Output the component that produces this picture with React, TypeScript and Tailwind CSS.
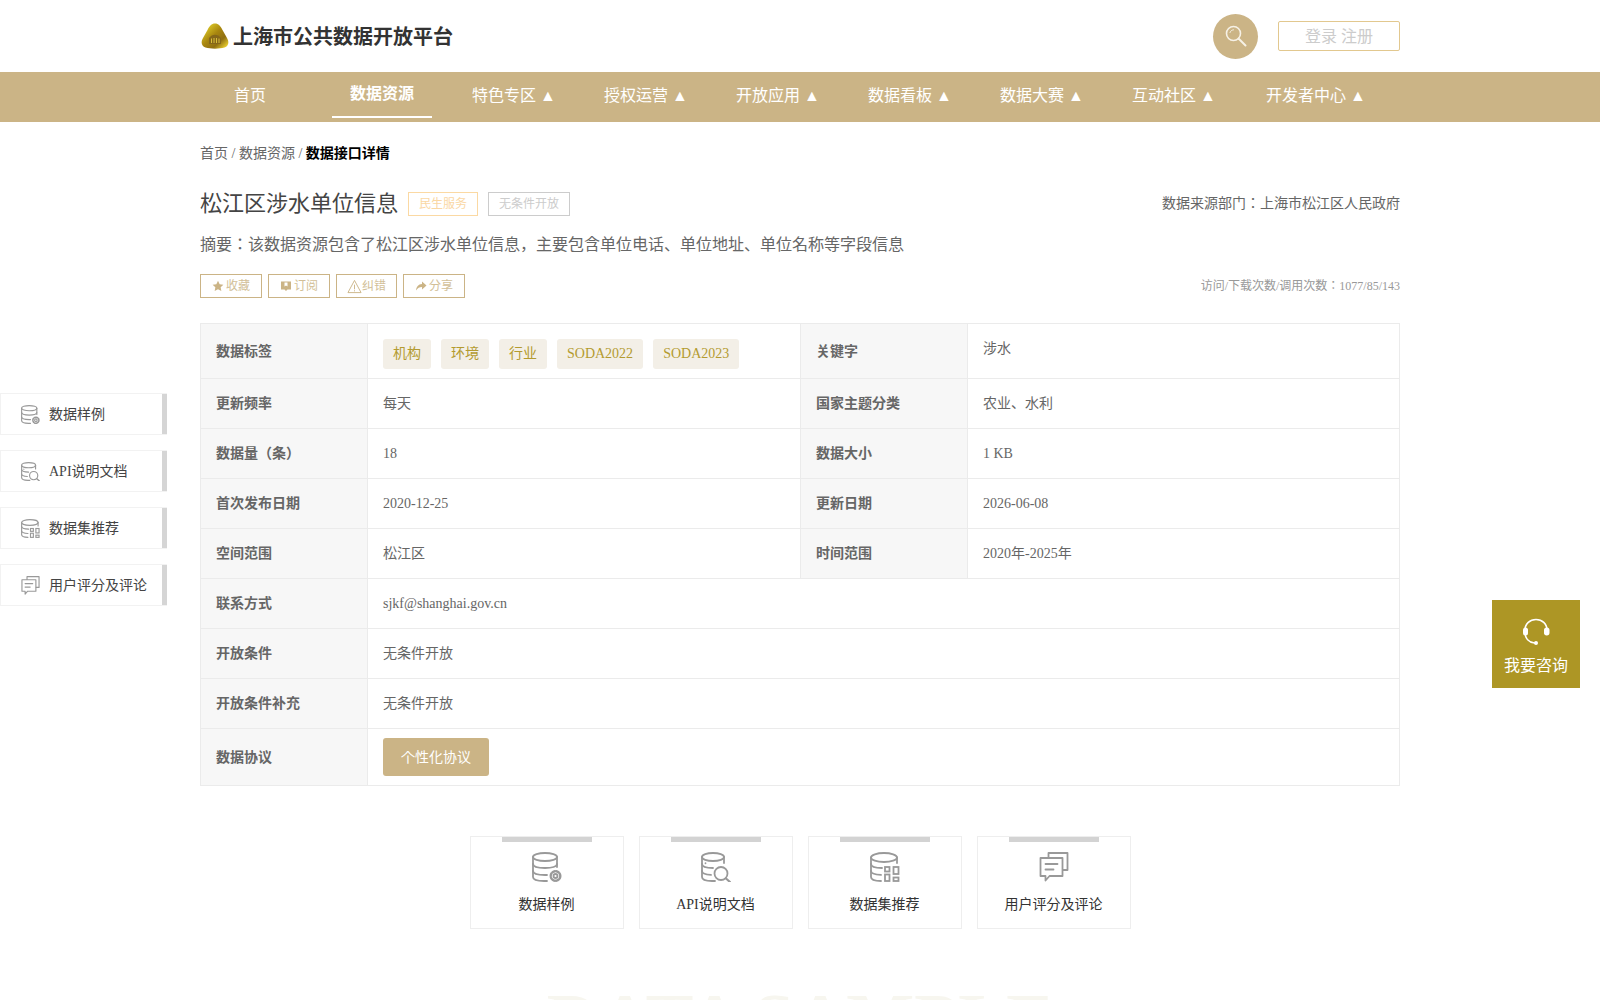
import React from "react";

const navItems = [
  { label: "首页", width: "w-[100px]" },
  { label: "数据资源", width: "w-[100px]", active: true },
  { label: "特色专区 ▲", width: "w-[100px]" },
  { label: "授权运营 ▲", width: "w-[100px]" },
  { label: "开放应用 ▲", width: "w-[100px]" },
  { label: "数据看板 ▲", width: "w-[100px]" },
  { label: "数据大赛 ▲", width: "w-[100px]" },
  { label: "互动社区 ▲", width: "w-[100px]" },
  { label: "开发者中心 ▲", width: "w-[120px]" },
];

const dataTags = ["机构", "环境", "行业", "SODA2022", "SODA2023"];

const labelCell =
  "w-[168px] border border-[#ebebeb] bg-[#f7f7f7] pl-[15px] text-[14px] font-bold text-[#666]";
const valueCell = "border border-[#ebebeb] pl-[15px] text-[14px] text-[#666]";

function SampleIcon() {
  return (
    <svg viewBox="0 0 30 30" className="h-full w-full" fill="none" stroke="#999" strokeWidth="1.800" strokeLinecap="round">
      <ellipse cx="13" cy="5" rx="12" ry="4" />
      <path d="M1 5V25c0 2.600 4 4 11 4h3" />
      <path d="M25 5V15" />
      <path d="M1 12c0 2.600 5 4 12 4s12-1.400 12-4" />
      <path d="M1 19c0 2.600 5 4 12 4h2" />
      <circle cx="23.500" cy="24" r="2" />
      <circle cx="23.500" cy="24" r="4.800" strokeWidth="2.400" strokeDasharray="2.400 1.400" />
    </svg>
  );
}

function ApiIcon() {
  return (
    <svg viewBox="0 0 30 30" className="h-full w-full" fill="none" stroke="#999" strokeWidth="1.800" strokeLinecap="round">
      <ellipse cx="12" cy="5" rx="11" ry="4" />
      <path d="M1 5V25c0 2.600 4 4 10 4h3" />
      <path d="M23 5V11" />
      <path d="M1 12c0 2.600 5 4 11 4" />
      <path d="M1 19c0 2.400 3 3.600 9 3.900" />
      <path d="M4.500 11.200v.1" />
      <circle cx="20" cy="21.500" r="6.500" />
      <path d="M25 26.500l4 3.500" strokeWidth="2.200" />
    </svg>
  );
}

function RecommendIcon() {
  return (
    <svg viewBox="0 0 30 30" className="h-full w-full" fill="none" stroke="#999" strokeWidth="1.800" strokeLinecap="round">
      <ellipse cx="14" cy="5.500" rx="13" ry="4.500" />
      <path d="M1 5.500V25c0 2.600 4 4 10 4" />
      <path d="M27 5.500V11" />
      <path d="M1 12c0 2.600 5 4 11 4" />
      <path d="M1 19c0 2.600 4 3.600 10 3.900" />
      <rect x="15" y="15" width="4.500" height="4.500" />
      <rect x="23.500" y="15" width="5" height="7" />
      <rect x="15" y="22.500" width="4.500" height="6.500" />
      <rect x="23.500" y="25.500" width="5" height="3.500" />
    </svg>
  );
}

function CommentIcon() {
  return (
    <svg viewBox="0 0 30 30" className="h-full w-full" fill="none" stroke="#999" strokeWidth="1.800" strokeLinecap="round" strokeLinejoin="round">
      <path d="M9.500 5.500V1h19v17H24" />
      <path d="M1.500 6h22v18H10.500l-4 4.500V24h-5z" />
      <path d="M6.500 12h12M6.500 17.500h8" />
    </svg>
  );
}

const sections = [
  { label: "数据样例", icon: <SampleIcon /> },
  { label: "API说明文档", icon: <ApiIcon /> },
  { label: "数据集推荐", icon: <RecommendIcon /> },
  { label: "用户评分及评论", icon: <CommentIcon /> },
];

function Logo() {
  return (
    <svg viewBox="0 0 28 26" className="h-[26px] w-[28px]">
      <defs>
        <linearGradient id="logoGold" x1="0.1" y1="0.1" x2="0.9" y2="0.9">
          <stop offset="0" stopColor="#e3d22a" />
          <stop offset="0.45" stopColor="#a8860f" />
          <stop offset="0.75" stopColor="#8f6f12" />
          <stop offset="1" stopColor="#e0c42a" />
        </linearGradient>
      </defs>
      <path d="M14 .5c3.500 0 5.500 2.500 7.500 6.500l4.500 8c2.500 4.500 1.500 8-2.500 9.500-5 1.500-14 1.500-19 0C.5 23 -.5 19.500 2 15l4.500-8C8.500 3 10.500.5 14 .5z" fill="url(#logoGold)" />
      <path d="M8 15c3-4.500 9-4.500 12 0v6H8z" fill="#85671a" />
      <path d="M10.500 15.500v4.500M13 15v5M15.500 15v5M18 15.500v4.500" stroke="#d9bf3a" strokeWidth="1" />
    </svg>
  );
}

function ActionButton({ icon, label, width, gap }: { icon: React.ReactNode; label: string; width: string; gap: string }) {
  return (
    <button className={`flex h-[24px] items-center justify-center border border-[#cbb486] text-[12px] text-[#d2bf98] ${width} ${gap}`}>
      {icon}
      {label}
    </button>
  );
}

export default function App() {
  return (
    <div className="relative h-[1000px] overflow-hidden bg-white [font-family:'Liberation_Serif','Noto_Sans_CJK_JP',serif]">
      {/* header */}
      <div className="mx-auto flex h-[72px] w-[1200px] items-center justify-between">
        <div className="flex items-center gap-[4px] pl-[1px]">
          <Logo />
          <span className="mt-[2px] text-[20px] font-bold text-[#333]">上海市公共数据开放平台</span>
        </div>
        <div className="flex items-center gap-[20px]">
          <div className="flex h-[45px] w-[45px] items-center justify-center rounded-full bg-[#cbb486]">
            <svg viewBox="0 0 22 22" className="h-[22px] w-[22px]" fill="none" stroke="#f6f1e6" strokeWidth="1.600" strokeLinecap="round">
              <circle cx="8.500" cy="8.500" r="7" />
              <path d="M13.500 13.500l7 7" strokeWidth="2" />
              <path d="M5 7.500c.5-1.500 1.700-2.500 3.500-2.700" strokeWidth="1" />
            </svg>
          </div>
          <div className="flex h-[30px] w-[122px] items-center justify-center rounded-[2px] border border-[#e2c88f] pt-[1px] text-[16px] text-[#ccc]">
            登录 注册
          </div>
        </div>
      </div>

      {/* nav */}
      <div className="h-[50px] bg-[#cbb486]">
        <div className="mx-auto flex h-full w-[1200px] gap-[32px] text-[16px] text-white">
          {navItems.map((item) => (
            <div
              key={item.label}
              className={`flex h-[46px] shrink-0 items-center justify-center ${item.width} ${
                item.active ? "border-b-2 border-white font-bold" : "mt-[1px]"
              }`}
            >
              <span className="whitespace-nowrap">{item.label}</span>
            </div>
          ))}
        </div>
      </div>

      <div className="mx-auto w-[1200px]">
        {/* breadcrumb */}
        <div className="mt-[23px] text-[14px] leading-[18px] text-[#666]">
          首页 / 数据资源 / <span className="font-bold text-black">数据接口详情</span>
        </div>

        {/* title */}
        <div className="mt-[25px] flex h-[30px] items-center justify-between">
          <div className="flex items-center">
            <span className="text-[22px] text-[#444]">松江区涉水单位信息</span>
            <span className="mt-[1px] ml-[10px] flex h-[24px] items-center border border-[#fbd9a3] px-[10px] text-[12px] text-[#fad7a4]">
              民生服务
            </span>
            <span className="mt-[1px] ml-[10px] flex h-[24px] items-center border border-[#ccc] px-[10px] text-[12px] text-[#ccc]">
              无条件开放
            </span>
          </div>
          <span className="text-[14px] text-[#666]">数据来源部门：上海市松江区人民政府</span>
        </div>

        <div className="mt-[15px] text-[16px] leading-[24px] text-[#666]">
          摘要：该数据资源包含了松江区涉水单位信息，主要包含单位电话、单位地址、单位名称等字段信息
        </div>

        {/* actions */}
        <div className="mt-[17px] flex items-center justify-between">
          <div className="flex gap-[6px]">
            <ActionButton
              width="w-[62px]"
              gap="gap-[2px]"
              label="收藏"
              icon={
                <svg viewBox="0 0 24 24" className="h-[12px] w-[12px]" fill="#cbb486">
                  <path d="M12 1.500l3.300 6.900 7.500 1-5.500 5.200 1.400 7.500L12 18.400 5.300 22l1.400-7.500L1.200 9.400l7.500-1z" />
                </svg>
              }
            />
            <ActionButton
              width="w-[62px]"
              gap="gap-[2px]"
              label="订阅"
              icon={
                <svg viewBox="0 0 12 12" className="h-[12px] w-[12px]" fill="#cbb486">
                  <path fillRule="evenodd" d="M1 1.500h10v8H7.500L6 11 4.500 9.500H1zM4.500 2.500v4L6 5.500l1.500 1v-4z" />
                </svg>
              }
            />
            <ActionButton
              width="w-[61px]"
              gap="gap-0"
              label="纠错"
              icon={
                <svg viewBox="0 0 16 16" className="h-[15px] w-[15px]" fill="none" stroke="#cbb486" strokeWidth="1">
                  <path d="M8 1.500l7 13H1z" />
                  <path d="M8 6v5M8 12v1.200" />
                </svg>
              }
            />
            <ActionButton
              width="w-[62px]"
              gap="gap-[2px]"
              label="分享"
              icon={
                <svg viewBox="0 0 12 12" className="h-[12px] w-[12px]" fill="#cbb486">
                  <path d="M7 1.500l4.500 4L7 9.500V7C4.500 7 2.500 8 1 10.500 1.300 7 3.300 4.200 7 4z" />
                </svg>
              }
            />
          </div>
          <span className="text-[12px] text-[#999]">访问/下载次数/调用次数：1077/85/143</span>
        </div>

        {/* info table */}
        <table className="mt-[25px] w-[1199px] table-fixed border-collapse border border-[#ebebeb]">
          <colgroup>
            <col className="w-[167px]" />
            <col className="w-[433px]" />
            <col className="w-[167px]" />
            <col className="w-[432px]" />
          </colgroup>
          <tbody>
            <tr className="h-[55px]">
              <td className={labelCell}>数据标签</td>
              <td className={valueCell}>
                <div className="mt-[5px] flex gap-[10px]">
                  {dataTags.map((tag) => (
                    <span key={tag} className="flex h-[30px] items-center rounded-[3px] bg-[#f3efe7] px-[10px] text-[14px] text-[#b39b30]">
                      {tag}
                    </span>
                  ))}
                </div>
              </td>
              <td className={labelCell}>关键字</td>
              <td className={`${valueCell} pb-[5px]`}>涉水</td>
            </tr>
            <tr className="h-[50px]">
              <td className={labelCell}>更新频率</td>
              <td className={valueCell}>每天</td>
              <td className={labelCell}>国家主题分类</td>
              <td className={valueCell}>农业、水利</td>
            </tr>
            <tr className="h-[50px]">
              <td className={labelCell}>数据量（条）</td>
              <td className={valueCell}>18</td>
              <td className={labelCell}>数据大小</td>
              <td className={valueCell}>1 KB</td>
            </tr>
            <tr className="h-[50px]">
              <td className={labelCell}>首次发布日期</td>
              <td className={valueCell}>2020-12-25</td>
              <td className={labelCell}>更新日期</td>
              <td className={valueCell}>2026-06-08</td>
            </tr>
            <tr className="h-[50px]">
              <td className={labelCell}>空间范围</td>
              <td className={valueCell}>松江区</td>
              <td className={labelCell}>时间范围</td>
              <td className={valueCell}>2020年-2025年</td>
            </tr>
            <tr className="h-[50px]">
              <td className={labelCell}>联系方式</td>
              <td className={valueCell} colSpan={3}>sjkf@shanghai.gov.cn</td>
            </tr>
            <tr className="h-[50px]">
              <td className={labelCell}>开放条件</td>
              <td className={valueCell} colSpan={3}>无条件开放</td>
            </tr>
            <tr className="h-[50px]">
              <td className={labelCell}>开放条件补充</td>
              <td className={valueCell} colSpan={3}>无条件开放</td>
            </tr>
            <tr className="h-[57px]">
              <td className={labelCell}>数据协议</td>
              <td className={valueCell} colSpan={3}>
                <button className="flex h-[38px] w-[106px] items-center justify-center rounded-[3px] bg-[#cbb486] text-[14px] text-white">
                  个性化协议
                </button>
              </td>
            </tr>
          </tbody>
        </table>

        {/* section cards */}
        <div className="mt-[50px] flex justify-center gap-[15px]">
          {sections.map((section) => (
            <div key={section.label} className="relative flex h-[93px] w-[154px] flex-col items-center border border-[#eee] pt-[15px]">
              <div className="absolute top-0 left-[31px] h-[5px] w-[90px] bg-[#d3d3d3]" />
              <div className="h-[30px] w-[30px]">{section.icon}</div>
              <span className="mt-[12px] text-[14px] text-[#333]">{section.label}</span>
            </div>
          ))}
        </div>

        {/* watermark */}
        <div className="mt-[54px] ml-[1px] text-center text-[72px] leading-[72px] font-bold whitespace-nowrap text-[#f7f6ef]">
          DATA SAMPLE
        </div>
      </div>

      {/* left floating menu */}
      <div className="absolute top-[393px] left-0 flex w-[167px] flex-col gap-[15px]">
        {sections.map((section) => (
          <div key={section.label} className="flex h-[42px] items-center border border-r-0 border-[#f2f2f2] pl-[20px]">
            <div className="h-[19px] w-[19px] shrink-0">{section.icon}</div>
            <span className="ml-[9px] flex-1 text-[14px] text-[#444]">{section.label}</span>
            <div className="h-full w-[5px] shrink-0 bg-[#d5d5d5]" />
          </div>
        ))}
      </div>

      {/* consult button */}
      <div className="absolute top-[600px] left-[1492px] flex h-[88px] w-[88px] flex-col items-center bg-[#ad9625] pt-[18px] text-white">
        <svg viewBox="0 0 28 28" className="h-[28px] w-[28px]" fill="none" stroke="white" strokeWidth="1.600" strokeLinecap="round">
          <path d="M3 12C3 5.500 8 1.500 14 1.500S25 5.500 25 12" />
          <path d="M3 14c0 6.500 4 10.500 9.500 11" />
          <rect x="1" y="9.500" width="5" height="8" rx="2.500" fill="white" stroke="none" />
          <rect x="22" y="9.500" width="5.500" height="8" rx="2.700" fill="white" stroke="none" />
          <circle cx="14" cy="25" r="2" fill="white" stroke="none" />
        </svg>
        <span className="mt-[9px] text-[16px] leading-[22px]">我要咨询</span>
      </div>
    </div>
  );
}
